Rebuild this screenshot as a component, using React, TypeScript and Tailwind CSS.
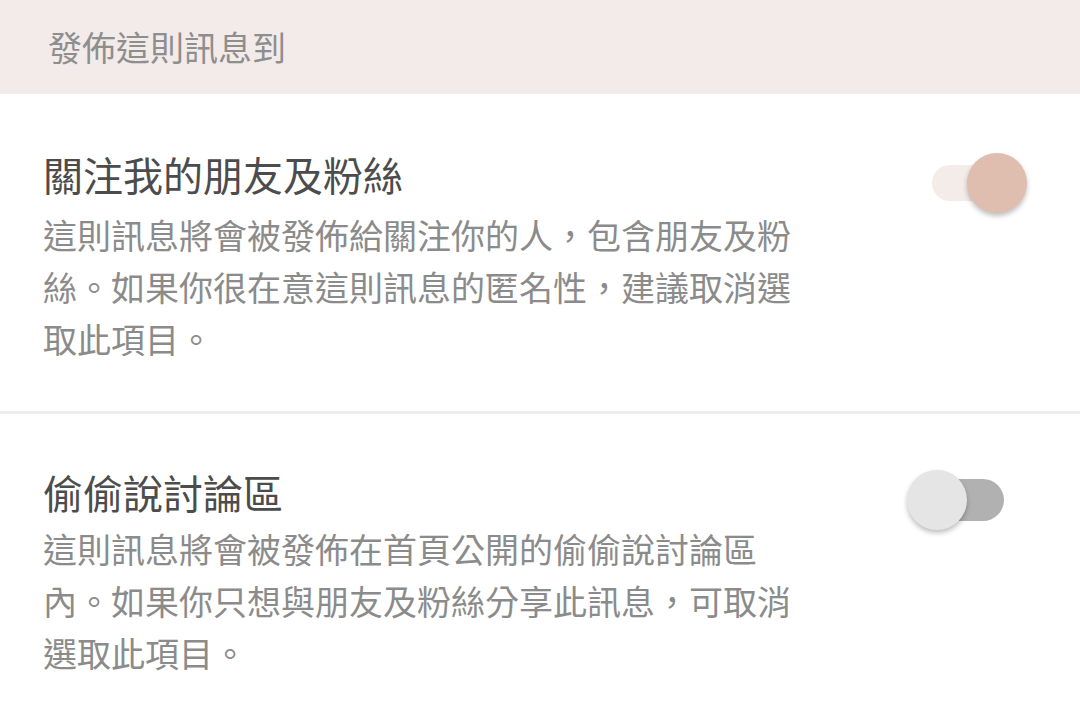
import React from "react";

const font = { fontFamily: '"Noto Sans CJK TC", "Noto Sans", sans-serif' };

function Switch({ on }: { on: boolean }) {
  return (
    <div className="relative w-[121px] h-[62px] shrink-0">
      <div
        className={
          on
            ? "absolute left-[25px] top-[13px] w-[72px] h-[36px] rounded-full bg-[#f4ece9]"
            : "absolute left-[27px] top-[10px] w-[70px] h-[42px] rounded-full bg-[#b1b1b1]"
        }
      />
      <div
        className={
          on
            ? "absolute left-[60px] top-[1px] w-[60px] h-[60px] rounded-full bg-[#dfbeb0] shadow-[0_3px_5px_rgba(0,0,0,0.25)]"
            : "absolute left-0 top-[1px] w-[60px] h-[60px] rounded-full bg-[#e5e5e5] shadow-[0_3px_5px_rgba(0,0,0,0.25)]"
        }
      />
    </div>
  );
}

function Section({
  title,
  lines,
  on,
  pt,
  pb,
  switchMt,
  bodyMt,
}: {
  title: string;
  lines: string[];
  on: boolean;
  pt: string;
  pb: string;
  switchMt: string;
  bodyMt: string;
}) {
  return (
    <div className={`pl-[43px] pr-[52px] ${pt} ${pb}`}>
      <div className="flex items-start justify-between">
        <div className="text-[40px] leading-[48px] text-[#4c4c4c]">{title}</div>
        <div className={switchMt}>
          <Switch on={on} />
        </div>
      </div>
      <div className={`${bodyMt} text-[34px] leading-[52px] text-[#8b8b8b]`}>
        {lines.map((l, i) => (
          <div key={i} className="whitespace-nowrap">
            {l}
          </div>
        ))}
      </div>
    </div>
  );
}

export default function App() {
  return (
    <div className="w-[1080px] h-[720px] bg-white overflow-hidden" style={font}>
      <div className="h-[94px] bg-[#f3ebe9] pl-[48px] flex items-center">
        <span className="text-[34px] text-[#8e8e8e] leading-none">發佈這則訊息到</span>
      </div>
      <Section
        title="關注我的朋友及粉絲"
        lines={[
          "這則訊息將會被發佈給關注你的人，包含朋友及粉",
          "絲。如果你很在意這則訊息的匿名性，建議取消選",
          "取此項目。",
        ]}
        on={true}
        pt="pt-[56px]"
        pb="pb-[46px]"
        switchMt="mt-[2px]"
        bodyMt="-mt-[5px]"
      />
      <div className="h-[3px] bg-[#f0ece9]" />
      <Section
        title="偷偷說討論區"
        lines={[
          "這則訊息將會被發佈在首頁公開的偷偷說討論區",
          "內。如果你只想與朋友及粉絲分享此訊息，可取消",
          "選取此項目。",
        ]}
        on={false}
        pt="pt-[54px]"
        pb="pb-[40px]"
        switchMt="mt-[1px]"
        bodyMt="-mt-[8px]"
      />
    </div>
  );
}
